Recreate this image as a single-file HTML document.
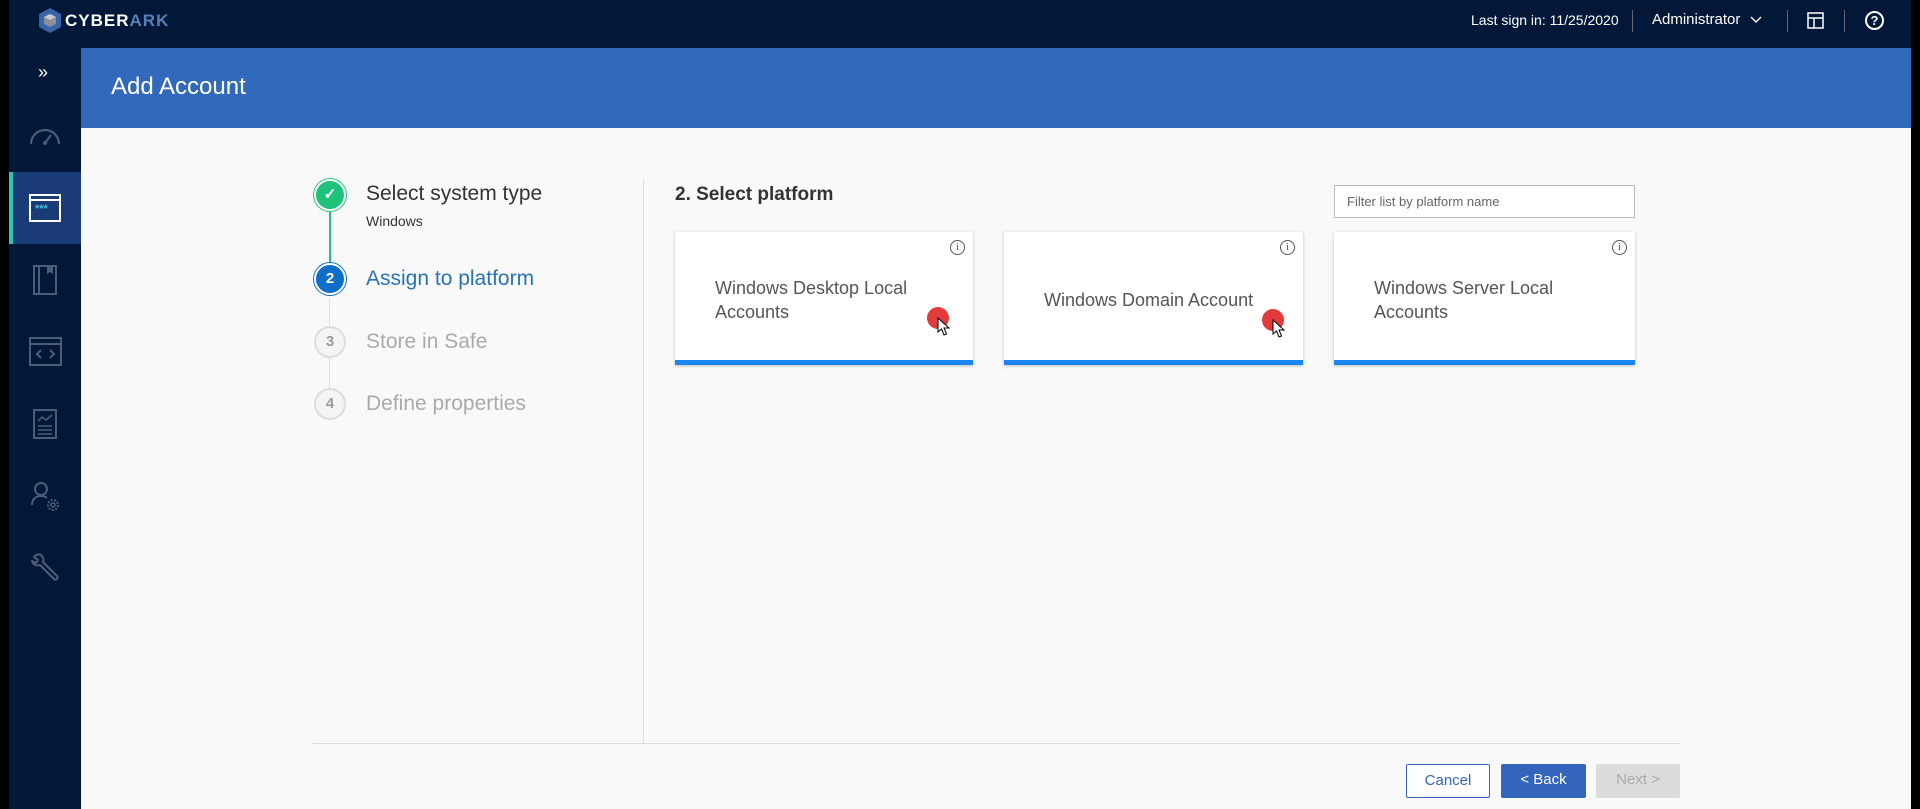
<!DOCTYPE html>
<html><head><meta charset="utf-8"><style>
*{box-sizing:border-box;margin:0;padding:0}
body{width:1920px;height:809px;overflow:hidden;background:#000;font-family:"Liberation Sans",sans-serif;position:relative}
.abs{position:absolute}
#top{left:9px;top:0;width:1902px;height:48px;background:#021838}
#side{left:9px;top:48px;width:72px;height:761px;background:#021838}
#main{left:81px;top:48px;width:1830px;height:761px;background:#f9f9f9}
#band{left:81px;top:48px;width:1830px;height:80px;background:#3269bb}
.t{color:#fff;font-size:14px}
.step{font-size:21px;white-space:nowrap}
.circ{width:32px;height:32px;border-radius:50%;text-align:center;line-height:28px;font-size:15px;font-weight:bold}
.card{background:#fff;box-shadow:0 1px 3px rgba(0,0,0,.25);border-bottom:5px solid #1a87f0;height:133px}
.card .txt{position:absolute;font-size:18px;color:#555;line-height:24px}
.info{position:absolute;right:8px;top:8px;width:15px;height:15px;border:1.3px solid #555;border-radius:50%;font-size:11px;line-height:13px;text-align:center;color:#555;font-family:"Liberation Serif",serif}
.dot{position:absolute;width:22px;height:22px;border-radius:50%;background:#e23b3b}
.cur{position:absolute}
.btn{height:34px;top:764px;text-align:center;line-height:32px;font-size:15px;border-radius:2px}
</style></head><body>
<div id="top" class="abs"></div>
<div id="side" class="abs"></div>
<div id="main" class="abs"></div>
<div id="band" class="abs"></div>
<svg class="abs" style="left:39px;top:8px" width="22" height="25" viewBox="0 0 22 25"><polygon points="11,0 22,6 22,19 11,25 0,19 0,6" fill="#3a64a8"/><polygon points="11,6 17,9 17,16 11,19 5,16 5,9" fill="#8a8f99"/><polygon points="11,6 17,9 11,12 5,9" fill="#c8ccd2"/></svg>
<div class="abs" style="left:65px;top:11px;font-size:17px;font-weight:bold;letter-spacing:1px;color:#fff">CYBER<span style="color:#5a7fb8">ARK</span></div>
<div class="abs t" style="left:1471px;top:12px;font-size:14px">Last sign in: 11/25/2020</div>
<div class="abs" style="left:1632px;top:10px;width:1px;height:22px;background:#667"></div>
<div class="abs t" style="left:1652px;top:11px;font-size:15px">Administrator</div>
<svg class="abs" style="left:1750px;top:16px" width="12" height="8"><path d="M1 1 L6 6 L11 1" stroke="#fff" fill="none" stroke-width="1.4"/></svg>
<div class="abs" style="left:1787px;top:10px;width:1px;height:22px;background:#667"></div>
<svg class="abs" style="left:1807px;top:12px" width="18" height="18"><rect x="1" y="1" width="15" height="15" fill="none" stroke="#fff" stroke-width="1.5"/><path d="M1 6H16M7 6V16" stroke="#fff" stroke-width="1.5"/></svg>
<div class="abs" style="left:1844px;top:10px;width:1px;height:22px;background:#667"></div>
<div class="abs" style="left:1865px;top:11px;width:19px;height:19px;border:2px solid #fff;border-radius:50%;color:#fff;font-size:13px;font-weight:bold;text-align:center;line-height:15px">?</div>
<div class="abs" style="left:38px;top:62px;color:#fff;font-size:18px">»</div>
<svg class="abs" style="left:28px;top:124px" width="34" height="22"><path d="M3 20 A14 14 0 0 1 31 20" fill="none" stroke="#4c5d78" stroke-width="2.2"/><path d="M17 19 L23 11" stroke="#4c5d78" stroke-width="2.2"/><circle cx="17" cy="19" r="2" fill="#4c5d78"/></svg>
<div class="abs" style="left:9px;top:172px;width:72px;height:72px;background:#1a3a78"></div>
<div class="abs" style="left:9px;top:172px;width:4px;height:72px;background:#2ec4b6"></div>
<div class="abs" style="left:29px;top:194px;width:32px;height:28px;border:2px solid #fff"></div>
<div class="abs" style="left:29px;top:199px;width:32px;height:2px;background:#fff"></div>
<div class="abs" style="left:35px;top:203px;color:#3fc0e0;font-size:11px;font-weight:bold">***</div>
<svg class="abs" style="left:32px;top:264px" width="26" height="32"><rect x="2" y="2" width="22" height="28" fill="none" stroke="#4c5d78" stroke-width="2"/><path d="M7 2V30" stroke="#4c5d78" stroke-width="2"/><path d="M15 2V10L18 8L21 10V2Z" fill="#4c5d78"/></svg>
<svg class="abs" style="left:29px;top:337px" width="34" height="30"><rect x="1" y="1" width="31" height="27" fill="none" stroke="#4c5d78" stroke-width="2"/><path d="M1 7H32M12 13L8 17L12 21M21 13L25 17L21 21" fill="none" stroke="#4c5d78" stroke-width="2"/></svg>
<svg class="abs" style="left:32px;top:408px" width="26" height="32"><rect x="2" y="2" width="22" height="28" fill="none" stroke="#4c5d78" stroke-width="2"/><path d="M6 13L10 9L14 12L20 7M6 18H20M6 22H20M6 26H20" fill="none" stroke="#4c5d78" stroke-width="1.6"/></svg>
<svg class="abs" style="left:30px;top:480px" width="32" height="34"><circle cx="11" cy="9" r="6" fill="none" stroke="#4c5d78" stroke-width="2"/><path d="M2 25C2 18 7 16 11 16C14 16 16 17 17 18" fill="none" stroke="#4c5d78" stroke-width="2"/><circle cx="23" cy="25" r="5" fill="none" stroke="#4c5d78" stroke-width="2" stroke-dasharray="2 1.5"/><circle cx="23" cy="25" r="2" fill="none" stroke="#4c5d78" stroke-width="1.5"/></svg>
<svg class="abs" style="left:29px;top:551px" width="34" height="34"><path d="M5 6C8 2 13 3 14 7C15 9 14 11 14 11L28 25C30 27 27 30 25 28L11 14C8 15 4 14 3 10L7 12L9 9Z" fill="none" stroke="#4c5d78" stroke-width="2" stroke-linejoin="round"/></svg>
<div class="abs" style="left:111px;top:73px;color:#fff;font-size:24px">Add Account</div>
<div class="abs" style="left:329px;top:211px;width:2px;height:56px;background:#27c07e"></div>
<div class="abs" style="left:329px;top:298px;width:1px;height:92px;background:#ddd"></div>
<div class="abs circ" style="left:314px;top:179px;background:#1fc27a;border:2px solid #fff;box-shadow:0 0 0 1px #1fc27a;color:#fff">✓</div>
<div class="abs step" style="left:366px;top:182px;color:#333">Select system type</div>
<div class="abs" style="left:366px;top:213px;color:#333;font-size:14px">Windows</div>
<div class="abs circ" style="left:314px;top:263px;background:#0f6ec9;border:2px solid #fff;box-shadow:0 0 0 1px #0f6ec9;color:#fff">2</div>
<div class="abs step" style="left:366px;top:267px;color:#2a72b8">Assign to platform</div>
<div class="abs circ" style="left:314px;top:326px;background:#f4f4f4;border:2px solid #ddd;color:#999">3</div>
<div class="abs step" style="left:366px;top:330px;color:#aaa">Store in Safe</div>
<div class="abs circ" style="left:314px;top:388px;background:#f4f4f4;border:2px solid #ddd;color:#999">4</div>
<div class="abs step" style="left:366px;top:392px;color:#aaa">Define properties</div>
<div class="abs" style="left:643px;top:180px;width:1px;height:563px;background:#ddd"></div>
<div class="abs" style="left:675px;top:184px;font-size:19px;font-weight:bold;color:#333">2. Select platform</div>
<div class="abs" style="left:1334px;top:185px;width:301px;height:33px;border:1px solid #bbb;background:#fff;font-size:13px;color:#666;padding:8px 12px">Filter list by platform name</div>
<div class="abs card" style="left:675px;top:232px;width:298px"><div class="info">i</div><div class="txt" style="left:40px;top:44px">Windows Desktop Local<br>Accounts</div><div class="dot" style="left:252px;top:75px"></div><svg class="cur" style="left:262px;top:85px" width="14" height="20"><path d="M1 1L1 15L4.5 12L7 18L9.5 17L7 11L12 11Z" fill="#fff" stroke="#000" stroke-width="1"/></svg></div>
<div class="abs card" style="left:1004px;top:232px;width:299px"><div class="info">i</div><div class="txt" style="left:40px;top:56px">Windows Domain Account</div><div class="dot" style="left:258px;top:77px"></div><svg class="cur" style="left:268px;top:87px" width="14" height="20"><path d="M1 1L1 15L4.5 12L7 18L9.5 17L7 11L12 11Z" fill="#fff" stroke="#000" stroke-width="1"/></svg></div>
<div class="abs card" style="left:1334px;top:232px;width:301px"><div class="info">i</div><div class="txt" style="left:40px;top:44px">Windows Server Local<br>Accounts</div></div>
<div class="abs" style="left:313px;top:743px;width:1367px;height:1px;background:#ddd"></div>
<div class="abs btn" style="left:1406px;width:84px;border:1px solid #3265bb;color:#3265bb;background:#fff">Cancel</div>
<div class="abs btn" style="left:1501px;width:85px;background:#3265bb;color:#fff">&lt; Back</div>
<div class="abs btn" style="left:1596px;width:84px;background:#dcdcdc;color:#aaa">Next &gt;</div>
</body></html>
